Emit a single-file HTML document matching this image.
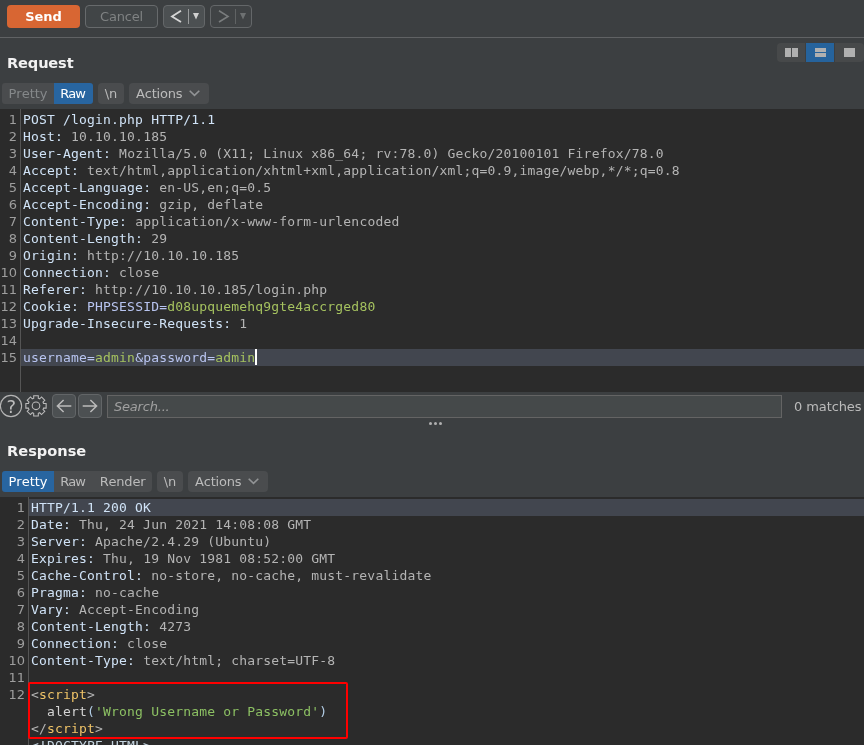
<!DOCTYPE html>
<html>
<head>
<meta charset="utf-8">
<title>Repeater</title>
<style>
html,body{margin:0;padding:0;}
body{width:864px;height:745px;overflow:hidden;background:#3c3f41;position:relative;
  font-family:"DejaVu Sans","Liberation Sans",sans-serif;font-size:13px;font-kerning:none;color:#bbbbbb;}
#root{position:absolute;left:0;top:0;width:864px;height:745px;overflow:hidden;will-change:transform;}
svg{position:absolute;display:block;overflow:visible;}
.btn{position:absolute;box-sizing:border-box;border-radius:4px;text-align:center;height:23px;top:5px;white-space:nowrap;}
#send{left:7px;width:73px;background:#d86633;color:#ffffff;font-weight:bold;line-height:23px;}
#cancel{left:85px;width:73px;border:1px solid #676a6c;letter-spacing:-0.2px;background:#414547;color:#7f8283;line-height:21px;}
.nav{border:1px solid #646769;width:42px;}
.sep{position:absolute;left:0;width:864px;height:1px;background:#606264;}
.title{position:absolute;left:7px;font-weight:bold;font-size:14.6px;letter-spacing:-0.15px;color:#f2f2f2;line-height:20px;white-space:nowrap;}
.tab{position:absolute;box-sizing:border-box;height:21px;line-height:21px;background:#4a4c4e;color:#bbbbbb;text-align:center;white-space:nowrap;}
.tab.sel{background:#2865a0;color:#ffffff;}
.tab.dim{color:#85888a;}
.editor{position:absolute;left:0;width:864px;background:#2b2b2b;overflow:hidden;}
.gutline{position:absolute;top:0;bottom:0;width:1px;background:#555555;}
.ln{position:absolute;left:0;text-align:right;color:#9e9e9e;font-size:13px;line-height:17px;height:17px;white-space:nowrap;}
.code{position:absolute;white-space:pre;font-family:"DejaVu Sans Mono","Liberation Mono",monospace;font-size:13px;letter-spacing:0.182px;line-height:17px;height:17px;color:#b4b4b4;}
.hl{position:absolute;right:0;height:17px;background:#42464f;}
.caret{position:absolute;width:2px;height:16px;background:#ffffff;}
.redbox{position:absolute;box-sizing:border-box;border:2px solid #ff0000;border-radius:2px;}
.h{color:#d0e3f7;}
.v{color:#b4b4b4;}
.p{color:#b8c4f0;}
.g{color:#a5c25f;}
.t{color:#f0c468;}
.w{color:#d4d4d4;}
.b{color:#b4cfe8;}
.s{color:#8cc063;}
.a{color:#c5d5e0;}
.d{color:#c5d5e0;}
.lay{position:absolute;top:43px;height:19px;background:#47494a;}
.lay i{position:absolute;background:#b0b0b0;display:block;}
.sbtn{position:absolute;box-sizing:border-box;top:394px;width:24px;height:24px;border:1px solid #626567;border-radius:4px;background:#4c5052;}
#search{position:absolute;box-sizing:border-box;left:107px;top:395px;width:675px;height:23px;border:1px solid #646464;background:#45494a;
  color:#a0a0a0;font-style:italic;letter-spacing:-0.2px;line-height:21px;padding-left:6px;white-space:nowrap;}
#matches{position:absolute;left:794px;top:395px;letter-spacing:-0.1px;line-height:23px;color:#bbbbbb;white-space:nowrap;}
.dot{position:absolute;top:422px;width:3px;height:3px;border-radius:1.5px;background:#b0b0b0;}
</style>
</head>
<body>
<div id="root">
<!-- toolbar -->
<div class="btn" id="send">Send</div>
<div class="btn" id="cancel">Cancel</div>
<div class="btn nav" style="left:163px;background:#4c5052;">
  <svg width="42" height="23" style="left:-1px;top:-1px;" viewBox="0 0 42 23">
    <path d="M18 5.8 L9 11.4 L18 17" fill="none" stroke="#d6d6d6" stroke-width="1.8"/>
    <rect x="25" y="4" width="1" height="15" fill="#9a9c9d"/>
    <path d="M30 8 L36 8 L33 14.5 Z" fill="#d0d0d0"/>
  </svg>
</div>
<div class="btn nav" style="left:210px;background:#404345;">
  <svg width="42" height="23" style="left:-1px;top:-1px;" viewBox="0 0 42 23">
    <path d="M9 5.8 L18 11.4 L9 17" fill="none" stroke="#7a7d7e" stroke-width="1.6"/>
    <rect x="25" y="4" width="1" height="15" fill="#606364"/>
    <path d="M30 8 L36 8 L33 14.5 Z" fill="#6e7172"/>
  </svg>
</div>
<div class="sep" style="top:37px;"></div>

<!-- layout buttons -->
<div class="lay" style="left:777px;width:28px;border-radius:4px 0 0 4px;"><i style="left:8px;top:5px;width:6px;height:9px;"></i><i style="left:15px;top:5px;width:6px;height:9px;"></i></div>
<div class="lay" style="left:806px;width:28px;background:#26639c;"><i style="left:9px;top:5px;width:11px;height:4px;"></i><i style="left:9px;top:10px;width:11px;height:4px;"></i></div>
<div class="lay" style="left:835px;width:29px;border-radius:0 4px 4px 0;"><i style="left:9px;top:5px;width:11px;height:9px;"></i></div>

<div class="title" style="top:53px;">Request</div>

<div class="tab dim" style="left:2px;top:83px;width:52px;border-radius:3px 0 0 3px;">Pretty</div>
<div class="tab sel" style="left:54px;top:83px;width:39px;border-radius:0 3px 3px 0;letter-spacing:-1px;text-align:left;padding-left:6.3px;">Raw</div>
<div class="tab" style="left:98px;top:83px;width:26px;border-radius:4px;">\n</div>
<div class="tab" style="left:129px;top:83px;width:80px;border-radius:4px;text-align:left;padding-left:7px;letter-spacing:-0.2px;">Actions
  <svg width="12" height="7" style="left:60.3px;top:7.4px;" viewBox="0 0 12 7"><path d="M0.7 0.7 L5.5 5.4 L10.3 0.7" fill="none" stroke="#929496" stroke-width="1.6"/></svg>
</div>

<div class="editor" id="req" style="top:109px;height:283px;">
<div class="gutline" style="left:20px;"></div>
<div class="hl" style="left:21px;top:240px;"></div>
<div class="ln" style="top:2px;width:17px;">1</div><div class="code" style="left:23px;top:2px;"><span class="h">POST /login.php HTTP/1.1</span></div>
<div class="ln" style="top:19px;width:17px;">2</div><div class="code" style="left:23px;top:19px;"><span class="h">Host:</span><span class="v"> 10.10.10.185</span></div>
<div class="ln" style="top:36px;width:17px;">3</div><div class="code" style="left:23px;top:36px;"><span class="h">User-Agent:</span><span class="v"> Mozilla/5.0 (X11; Linux x86_64; rv:78.0) Gecko/20100101 Firefox/78.0</span></div>
<div class="ln" style="top:53px;width:17px;">4</div><div class="code" style="left:23px;top:53px;"><span class="h">Accept:</span><span class="v"> text/html,application/xhtml+xml,application/xml;q=0.9,image/webp,*/*;q=0.8</span></div>
<div class="ln" style="top:70px;width:17px;">5</div><div class="code" style="left:23px;top:70px;"><span class="h">Accept-Language:</span><span class="v"> en-US,en;q=0.5</span></div>
<div class="ln" style="top:87px;width:17px;">6</div><div class="code" style="left:23px;top:87px;"><span class="h">Accept-Encoding:</span><span class="v"> gzip, deflate</span></div>
<div class="ln" style="top:104px;width:17px;">7</div><div class="code" style="left:23px;top:104px;"><span class="h">Content-Type:</span><span class="v"> application/x-www-form-urlencoded</span></div>
<div class="ln" style="top:121px;width:17px;">8</div><div class="code" style="left:23px;top:121px;"><span class="h">Content-Length:</span><span class="v"> 29</span></div>
<div class="ln" style="top:138px;width:17px;">9</div><div class="code" style="left:23px;top:138px;"><span class="h">Origin:</span><span class="v"> http://10.10.10.185</span></div>
<div class="ln" style="top:155px;width:17px;">10</div><div class="code" style="left:23px;top:155px;"><span class="h">Connection:</span><span class="v"> close</span></div>
<div class="ln" style="top:172px;width:17px;">11</div><div class="code" style="left:23px;top:172px;"><span class="h">Referer:</span><span class="v"> http://10.10.10.185/login.php</span></div>
<div class="ln" style="top:189px;width:17px;">12</div><div class="code" style="left:23px;top:189px;"><span class="h">Cookie:</span><span class="v"> </span><span class="p">PHPSESSID=</span><span class="g">d08upquemehq9gte4accrged80</span></div>
<div class="ln" style="top:206px;width:17px;">13</div><div class="code" style="left:23px;top:206px;"><span class="h">Upgrade-Insecure-Requests:</span><span class="v"> 1</span></div>
<div class="ln" style="top:223px;width:17px;">14</div><div class="code" style="left:23px;top:223px;"></div>
<div class="ln" style="top:240px;width:17px;">15</div><div class="code" style="left:23px;top:240px;"><span class="p">username=</span><span class="g">admin</span><span class="p">&amp;password=</span><span class="g">admin</span></div>
<div class="caret" style="left:255px;top:240px;"></div>
</div>

<!-- search bar -->
<svg width="24" height="24" style="left:0;top:394px;" viewBox="0 0 24 24">
  <circle cx="11" cy="12" r="10.6" fill="none" stroke="#b4b4b4" stroke-width="1.1"/>
  <text x="11.4" y="18.7" text-anchor="middle" font-family="DejaVu Sans, Liberation Sans, sans-serif" font-size="18" fill="#bcbcbc">?</text>
</svg>
<svg width="24" height="24" style="left:24px;top:394px;" viewBox="0 0 24 24">
  <g fill="none" stroke="#bcbcbc" stroke-width="1.05">
    <circle cx="12" cy="11.8" r="3.8"/>
    <path d="M9.70 4.24 L9.70 1.66 L14.30 1.66 L14.30 4.24 A7.90 7.90 0 0 1 15.72 4.83 L17.54 3.00 L20.80 6.26 L18.97 8.08 A7.90 7.90 0 0 1 19.56 9.50 L22.14 9.50 L22.14 14.10 L19.56 14.10 A7.90 7.90 0 0 1 18.97 15.52 L20.80 17.34 L17.54 20.60 L15.72 18.77 A7.90 7.90 0 0 1 14.30 19.36 L14.30 21.94 L9.70 21.94 L9.70 19.36 A7.90 7.90 0 0 1 8.28 18.77 L6.46 20.60 L3.20 17.34 L5.03 15.52 A7.90 7.90 0 0 1 4.44 14.10 L1.86 14.10 L1.86 9.50 L4.44 9.50 A7.90 7.90 0 0 1 5.03 8.08 L3.20 6.26 L6.46 3.00 L8.28 4.83 A7.90 7.90 0 0 1 9.70 4.24 Z"/>
  </g>
</svg>
<div class="sbtn" style="left:52px;">
  <svg width="24" height="24" style="left:-1px;top:-1px;" viewBox="0 0 24 24"><path d="M19.3 12 H5.8 M11.6 6 L5.4 12 L11.6 18" fill="none" stroke="#bababa" stroke-width="1.5"/></svg>
</div>
<div class="sbtn" style="left:78px;">
  <svg width="24" height="24" style="left:-1px;top:-1px;" viewBox="0 0 24 24"><path d="M4.7 12 H18.2 M12.4 6 L18.6 12 L12.4 18" fill="none" stroke="#bababa" stroke-width="1.5"/></svg>
</div>
<div id="search">Search...</div>
<div id="matches">0 matches</div>
<div class="dot" style="left:429px;"></div><div class="dot" style="left:434px;"></div><div class="dot" style="left:439px;"></div>

<div class="title" style="top:441px;letter-spacing:0;">Response</div>

<div class="tab sel" style="left:2px;top:471px;width:52px;border-radius:3px 0 0 3px;">Pretty</div>
<div class="tab" style="left:54px;top:471px;width:39px;letter-spacing:-1px;text-align:left;padding-left:6.3px;">Raw</div>
<div class="tab" style="left:93px;top:471px;width:59px;border-radius:0 4px 4px 0;letter-spacing:-0.2px;">Render</div>
<div class="tab" style="left:157px;top:471px;width:26px;border-radius:4px;">\n</div>
<div class="tab" style="left:188px;top:471px;width:80px;border-radius:4px;text-align:left;padding-left:7px;letter-spacing:-0.2px;">Actions
  <svg width="12" height="7" style="left:60.3px;top:7.4px;" viewBox="0 0 12 7"><path d="M0.7 0.7 L5.5 5.4 L10.3 0.7" fill="none" stroke="#929496" stroke-width="1.6"/></svg>
</div>

<div class="editor" id="resp" style="top:497px;height:248px;">
<div class="gutline" style="left:28px;"></div>
<div class="hl" style="left:29px;top:2px;"></div>
<div class="ln" style="top:2px;width:25px;">1</div><div class="code" style="left:31px;top:2px;"><span class="h">HTTP/1.1 200 OK</span></div>
<div class="ln" style="top:19px;width:25px;">2</div><div class="code" style="left:31px;top:19px;"><span class="h">Date:</span><span class="v"> Thu, 24 Jun 2021 14:08:08 GMT</span></div>
<div class="ln" style="top:36px;width:25px;">3</div><div class="code" style="left:31px;top:36px;"><span class="h">Server:</span><span class="v"> Apache/2.4.29 (Ubuntu)</span></div>
<div class="ln" style="top:53px;width:25px;">4</div><div class="code" style="left:31px;top:53px;"><span class="h">Expires:</span><span class="v"> Thu, 19 Nov 1981 08:52:00 GMT</span></div>
<div class="ln" style="top:70px;width:25px;">5</div><div class="code" style="left:31px;top:70px;"><span class="h">Cache-Control:</span><span class="v"> no-store, no-cache, must-revalidate</span></div>
<div class="ln" style="top:87px;width:25px;">6</div><div class="code" style="left:31px;top:87px;"><span class="h">Pragma:</span><span class="v"> no-cache</span></div>
<div class="ln" style="top:104px;width:25px;">7</div><div class="code" style="left:31px;top:104px;"><span class="h">Vary:</span><span class="v"> Accept-Encoding</span></div>
<div class="ln" style="top:121px;width:25px;">8</div><div class="code" style="left:31px;top:121px;"><span class="h">Content-Length:</span><span class="v"> 4273</span></div>
<div class="ln" style="top:138px;width:25px;">9</div><div class="code" style="left:31px;top:138px;"><span class="h">Connection:</span><span class="v"> close</span></div>
<div class="ln" style="top:155px;width:25px;">10</div><div class="code" style="left:31px;top:155px;"><span class="h">Content-Type:</span><span class="v"> text/html; charset=UTF-8</span></div>
<div class="ln" style="top:172px;width:25px;">11</div><div class="code" style="left:31px;top:172px;"></div>
<div class="ln" style="top:189px;width:25px;">12</div><div class="code" style="left:31px;top:189px;"><span class="v">&lt;</span><span class="t">script</span><span class="v">&gt;</span></div>
<div class="code" style="left:31px;top:206px;"><span class="w">  alert</span><span class="b">(</span><span class="s">'Wrong Username or Password'</span><span class="b">)</span></div>
<div class="code" style="left:31px;top:223px;"><span class="v">&lt;/</span><span class="t">script</span><span class="v">&gt;</span></div>
<div class="code" style="left:31px;top:240px;"><span class="d">&lt;!DOCTYPE HTML&gt;</span></div>
<div class="redbox" style="left:28px;top:185px;width:320px;height:57px;"></div>
</div>
</div>
</body>
</html>
